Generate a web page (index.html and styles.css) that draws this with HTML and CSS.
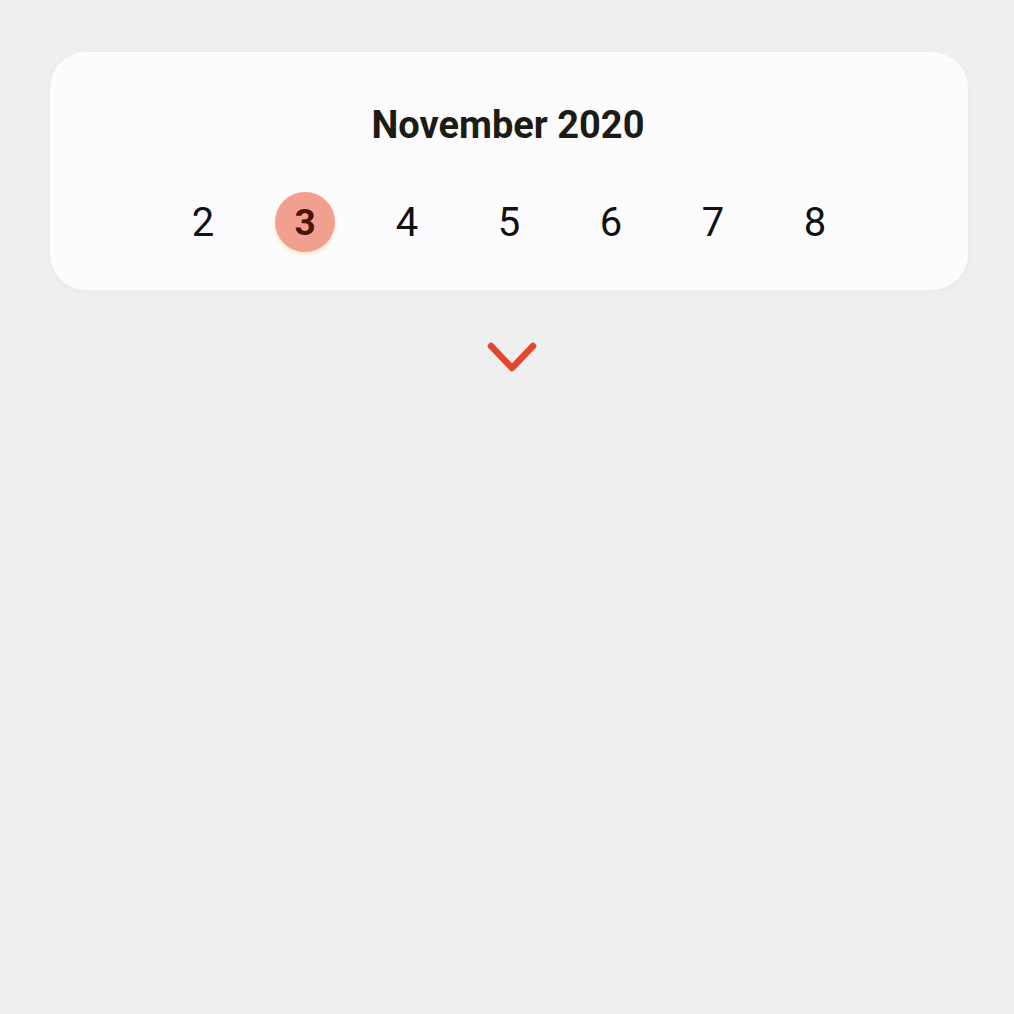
FILE: index.html
```html
<!DOCTYPE html>
<html>
<head>
<meta charset="utf-8">
<link rel="stylesheet" href="styles.css">
</head>
<body>
<div class="page">
  <div class="card">
    <div class="title">November 2020</div>
    <div class="days">
      <div class="day">2</div>
      <div class="day selected">3</div>
      <div class="day">4</div>
      <div class="day">5</div>
      <div class="day">6</div>
      <div class="day">7</div>
      <div class="day">8</div>
    </div>
  </div>
  <div class="toggle">
    <svg width="52" height="36" viewBox="0 0 52 36"><path d="M5 6 L26 28 L47 6" fill="none" stroke="#e5472e" stroke-width="6.5" stroke-linecap="round" stroke-linejoin="round"/></svg>
  </div>
</div>
</body>
</html>
```
FILE: styles.css
```css
html, body {
  margin: 0;
  padding: 0;
  background: #efefef;
  font-family: Roboto, "Liberation Sans", sans-serif;
}
.page {
  width: 1014px;
  height: 1014px;
  display: flex;
  flex-direction: column;
  align-items: center;
  padding-top: 52px;
  box-sizing: border-box;
}
.card {
  width: 918px;
  height: 238px;
  margin-left: 4px;
  background: #fcfcfe;
  border-radius: 36px;
  box-shadow: 0 2px 6px rgba(0,0,0,0.03);
  display: flex;
  flex-direction: column;
  align-items: center;
  box-sizing: border-box;
  padding-top: 50px;
}
.title {
  font-size: 38px;
  font-weight: 700;
  color: #1c1c14;
  line-height: 46px;
  margin-left: -2px;
}
.days {
  display: flex;
  margin-top: 44px;
  margin-left: 0;
  gap: 42px;
}
.day {
  width: 60px;
  height: 60px;
  border-radius: 50%;
  display: flex;
  align-items: center;
  justify-content: center;
  font-size: 40px;
  color: #111;
}
.day.selected {
  background: #f1a08f;
  color: #4a1408;
  font-weight: 700;
  font-size: 37px;
  box-shadow: 0 2px 4px rgba(250, 200, 120, 0.5);
}
.toggle {
  margin-top: 50px;
  margin-left: 10px;
  display: flex;
}
```
